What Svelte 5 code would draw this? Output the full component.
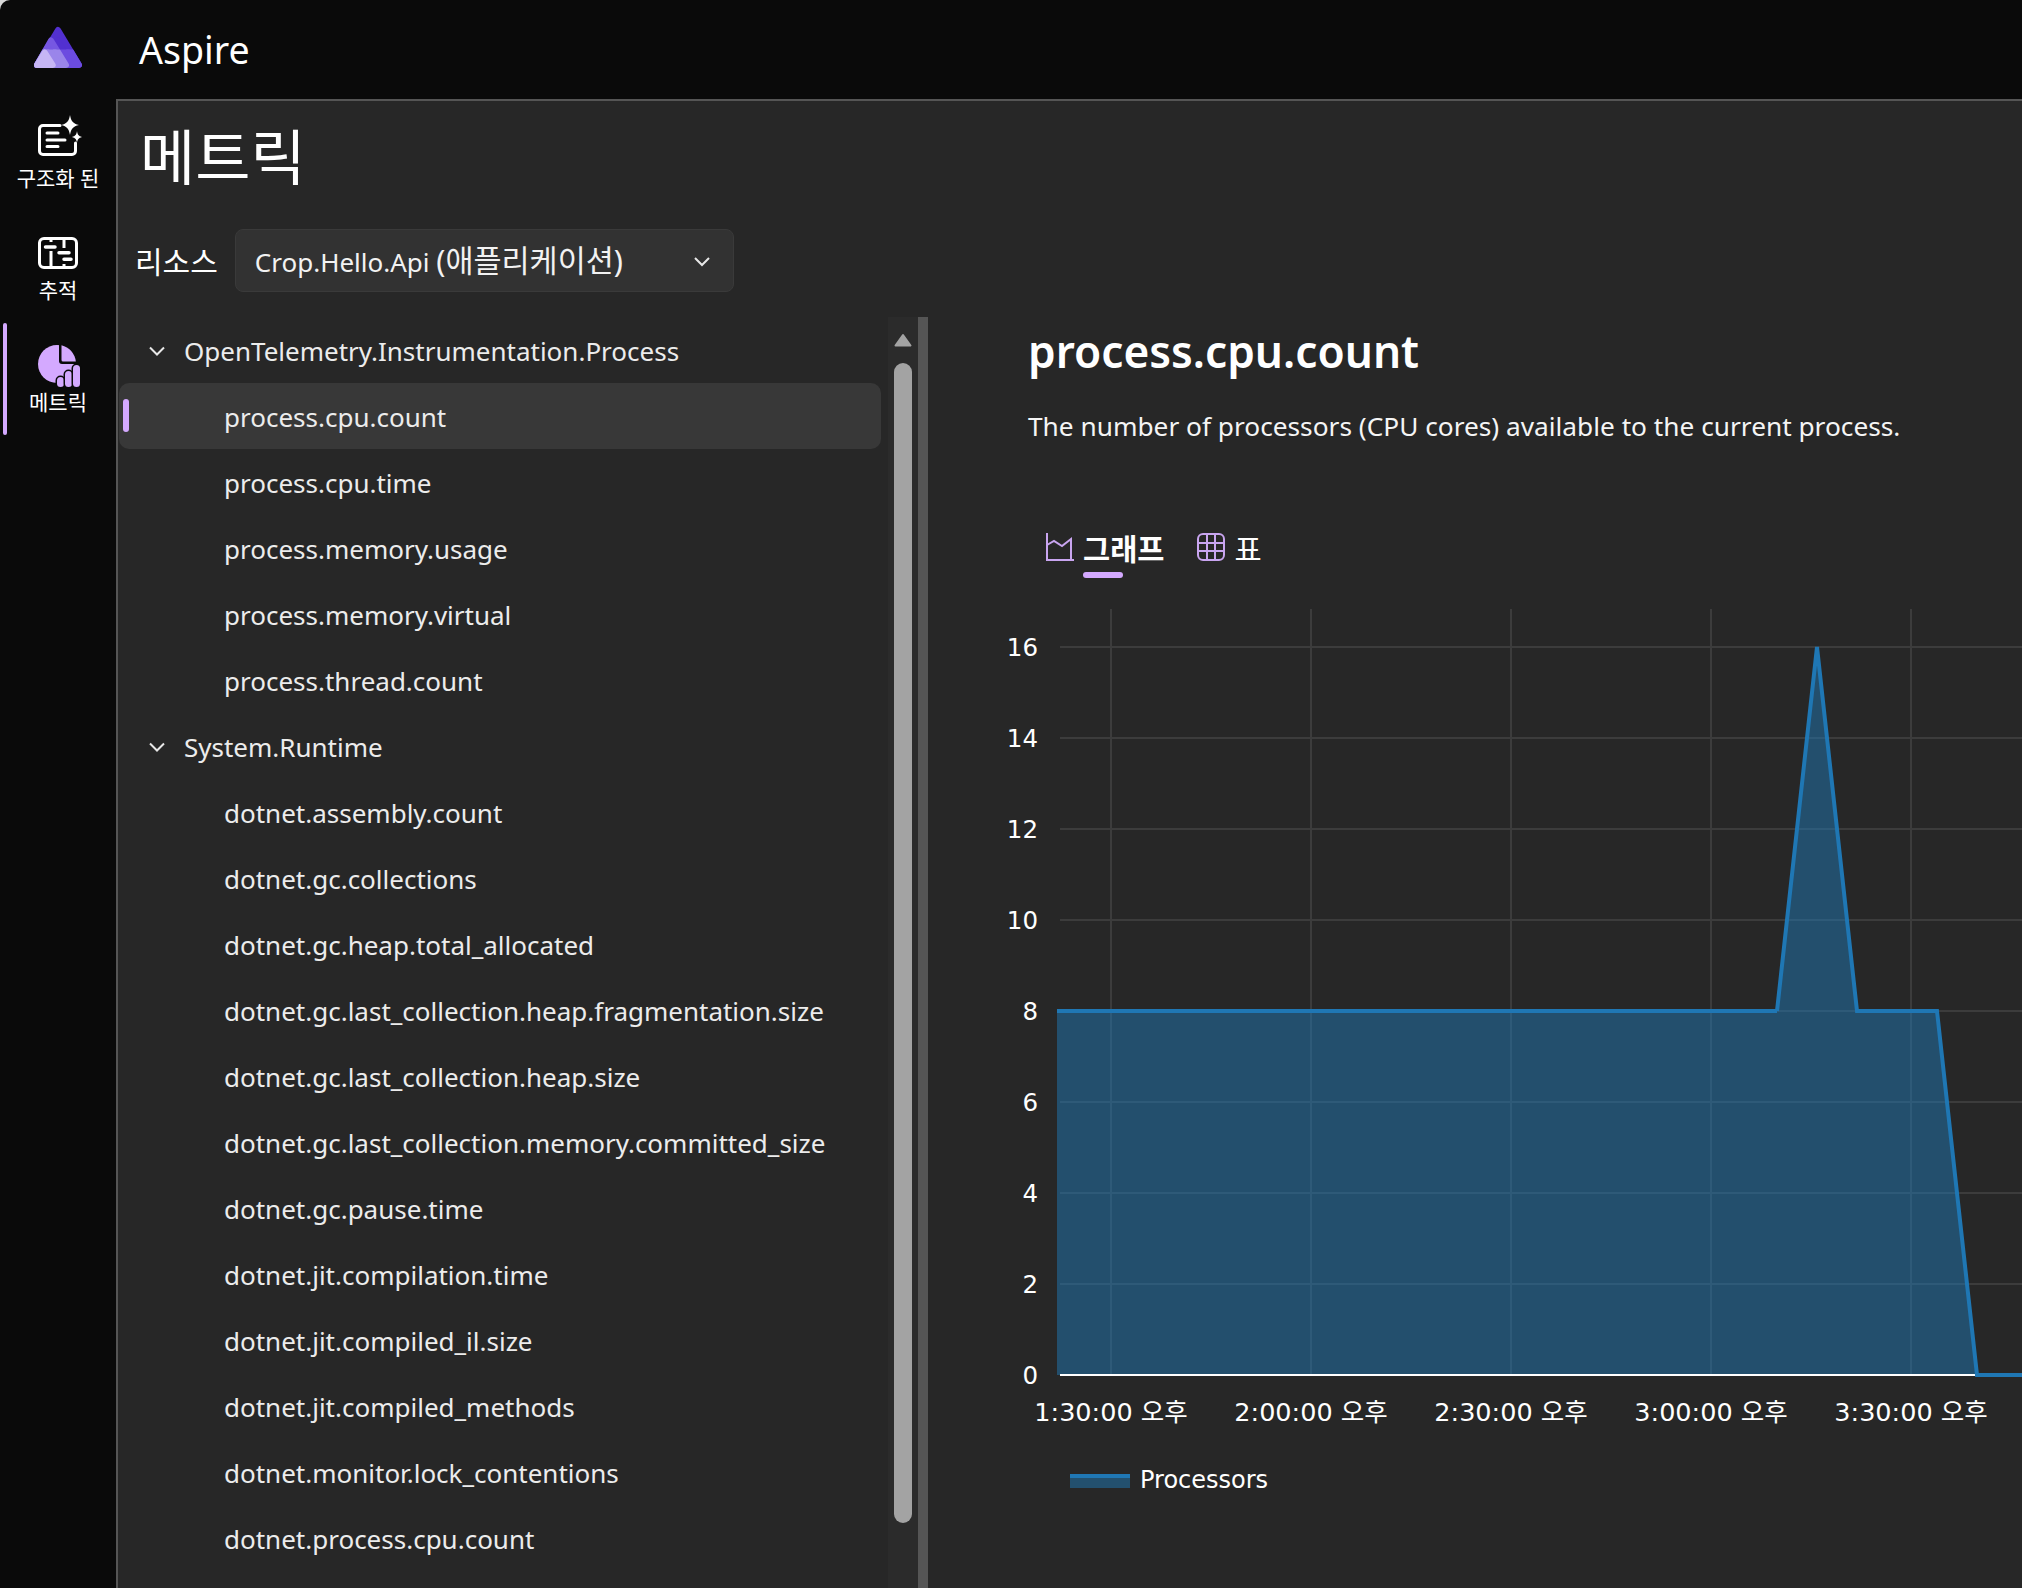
<script>
  const groups = [
    {
      name: 'OpenTelemetry.Instrumentation.Process',
      items: ['process.cpu.count', 'process.cpu.time', 'process.memory.usage', 'process.memory.virtual', 'process.thread.count']
    },
    {
      name: 'System.Runtime',
      items: [
        'dotnet.assembly.count',
        'dotnet.gc.collections',
        'dotnet.gc.heap.total_allocated',
        'dotnet.gc.last_collection.heap.fragmentation.size',
        'dotnet.gc.last_collection.heap.size',
        'dotnet.gc.last_collection.memory.committed_size',
        'dotnet.gc.pause.time',
        'dotnet.jit.compilation.time',
        'dotnet.jit.compiled_il.size',
        'dotnet.jit.compiled_methods',
        'dotnet.monitor.lock_contentions',
        'dotnet.process.cpu.count'
      ]
    }
  ];
  const selected = 'process.cpu.count';

  // chart coordinates are page pixels, the svg viewBox starts at the pane origin
  const yTicks = [16, 14, 12, 10, 8, 6, 4, 2, 0];
  const yOf = (v) => 1375 - v * 45.5;
  const xTicks = [
    [1111, '1:30:00 오후'],
    [1311, '2:00:00 오후'],
    [1511, '2:30:00 오후'],
    [1711, '3:00:00 오후'],
    [1911, '3:30:00 오후']
  ];
  const line = [[1057, 8], [1777, 8], [1817, 16], [1857, 8], [1937, 8], [1977, 0], [2030, 0]];
  const linePts = line.map(([x, v]) => `${x},${yOf(v)}`).join(' ');
  const areaPts = `1057,${yOf(0)} ${linePts}`;
</script>

<div class="shell">
  <header class="topbar">
    <div class="logo">
      <svg width="48" height="44" viewBox="0 0 48 44" stroke-width="6" stroke-linejoin="round">
        <defs>
          <clipPath id="logo-lower"><rect x="0" y="23.5" width="48" height="21" /></clipPath>
        </defs>
        <path d="M24 4 L45 39 H3 Z" fill="#5230d0" stroke="#5230d0" />
        <path d="M17 14.500 L32 39 H3 Z" fill="#7657e2" stroke="#7657e2" />
        <g clip-path="url(#logo-lower)">
          <path d="M24 4 L45 39 H3 Z" fill="#6c4ce0" stroke="#6c4ce0" />
          <path d="M17 14.500 L32 39 H3 Z" fill="#9a85ea" stroke="#9a85ea" />
        </g>
        <path d="M10.800 26.500 L18.700 39 H3 Z" fill="#c6b6f4" stroke="#c6b6f4" />
      </svg>
    </div>
    <span class="brand">Aspire</span>
  </header>

  <div class="body">
    <nav class="rail">
      <div class="rail-item">
        <svg class="rail-icon" width="48" height="48" viewBox="0 0 48 48" fill="none" stroke="#fff" stroke-width="3" stroke-linecap="round">
          <path d="M26 12.500 H9 a3.500 3.500 0 0 0 -3.500 3.500 V38 a3.500 3.500 0 0 0 3.500 3.500 H38 a3.500 3.500 0 0 0 3.500 -3.500 V30" />
          <path d="M13 20 H24 M13 27 H31 M13 33.500 H24" />
          <path d="M36 2 C37 8 39 10.500 45 12 C39 13.500 37 16 36 22 C35 16 33 13.500 27 12 C33 10.500 35 8 36 2 Z" fill="#fff" stroke="none" />
          <path d="M43 18 C43.500 21.500 44.500 23 48 24 C44.500 25 43.500 26.500 43 30 C42.500 26.500 41.500 25 38 24 C41.500 23 42.500 21.500 43 18 Z" fill="#fff" stroke="none" />
        </svg>
        <span>구조화 된</span>
      </div>
      <div class="rail-item">
        <svg class="rail-icon" width="48" height="48" viewBox="0 -4 48 48" fill="none" stroke="#fff" stroke-width="3" stroke-linecap="round">
          <rect x="5.500" y="9.500" width="37" height="29" rx="4.500" />
          <path d="M17 10 V13 M17 22 V38 M30 10 V19 M30 35 V38" stroke-linecap="butt" />
          <path d="M11.500 18 H21 M25 23.700 H35 M30 30.300 H37" stroke-width="3.500" />
        </svg>
        <span>추적</span>
      </div>
      <div class="rail-item active">
        <svg class="rail-icon" width="48" height="48" viewBox="0 -4 48 48">
          <circle cx="23" cy="23" r="19" fill="#d4a9ff" />
          <path d="M25 0 V20 a3 3 0 0 0 3 3 H48 V0 Z" fill="#0a0a0a" />
          <path d="M27.500 4.200 V19 a1.500 1.500 0 0 0 1.500 1.500 H41.800 A19 19 0 0 0 27.500 4.200 Z" fill="#d4a9ff" />
          <g fill="#d4a9ff" stroke="#0a0a0a" stroke-width="3" paint-order="stroke">
            <rect x="23" y="36" width="7" height="10" rx="3.500" />
            <rect x="31" y="30" width="7" height="16" rx="3.500" />
            <rect x="39" y="24" width="7" height="22" rx="3.500" />
          </g>
        </svg>
        <span>메트릭</span>
      </div>
    </nav>

    <main class="page">
      <h1>메트릭</h1>

      <div class="resource">
        <span class="resource-label">리소스</span>
        <div class="select">
          <span class="select-value">Crop.Hello.Api <span class="ko">(애플리케이션)</span></span>
          <svg width="22" height="22" viewBox="0 0 22 22" fill="none" stroke="#e8e8e8" stroke-width="2">
            <path d="M4 8 L11 15 L18 8" />
          </svg>
        </div>
      </div>

      <div class="split">
        <div class="tree">
          {#each groups as group}
            <div class="row group">
              <svg width="20" height="20" viewBox="0 0 20 20" fill="none" stroke="#e8e8e8" stroke-width="2">
                <path d="M3 6.500 L10 13.500 L17 6.500" />
              </svg>
              <span>{group.name}</span>
            </div>
            {#each group.items as item}
              <div class="row leaf" class:selected={item === selected}>
                <span>{item}</span>
              </div>
            {/each}
          {/each}
        </div>

        <div class="scrollbar">
          <svg class="arrow" width="18" height="14" viewBox="0 0 18 14">
            <path d="M9 2 L16.500 12.500 H1.500 Z" fill="#a3a3a3" stroke="#a3a3a3" stroke-width="2" stroke-linejoin="round" />
          </svg>
          <div class="thumb"></div>
        </div>
        <div class="splitter"></div>

        <section class="detail">
          <h2>process.cpu.count</h2>
          <p>The number of processors (CPU cores) available to the current process.</p>

          <div class="tabs">
            <div class="tab active">
              <svg width="28" height="28" viewBox="0 0 28 28" fill="none" stroke="#c9a5f0" stroke-width="2">
                <path d="M1 0 V27 H28 M1 12 L8 8 L16 13 L25 6 V27" />
              </svg>
              <span>그래프</span>
            </div>
            <div class="tab">
              <svg width="28" height="28" viewBox="0 0 28 28" fill="none" stroke="#c9a5f0" stroke-width="2">
                <rect x="1" y="1" width="26" height="26" rx="5" />
                <path d="M10 1 V27 M18 1 V27 M1 10 H27 M1 18 H27" />
              </svg>
              <span>표</span>
            </div>
          </div>

          <svg class="chart" width="1094" height="998" viewBox="928 590 1094 998">
            {#each xTicks as [x]}
              <line x1={x} x2={x} y1="609" y2="1375" class="grid" />
            {/each}
            {#each yTicks as v}
              <line x1="1060" x2="2022" y1={yOf(v)} y2={yOf(v)} class="grid" />
              <text x="1038" y={yOf(v) + 9} text-anchor="end" class="tick">{v}</text>
            {/each}
            <polygon points={areaPts} fill="#1f77b4" fill-opacity="0.5" />
            <line x1="1060" x2="1980" y1="1375" y2="1375" stroke="#fff" stroke-width="2" />
            <polyline points={linePts.split(' ').slice(1).join(' ')} fill="none" stroke="#1f77b4" stroke-width="4" />
            <line x1="1057" x2="1777" y1={yOf(8)} y2={yOf(8)} stroke="#1f77b4" stroke-width="4" />
            <polyline points="1977,1375 2030,1375" fill="none" stroke="#1f77b4" stroke-width="4" />
            {#each xTicks as [x, label]}
              <text {x} y="1421" text-anchor="middle" class="xtick">{label}</text>
            {/each}
            <rect x="1070" y="1474" width="60" height="14" fill="#23506e" />
            <rect x="1070" y="1474" width="60" height="4" fill="#1f77b4" />
            <text x="1140" y="1488" class="legend">Processors</text>
          </svg>
        </section>
      </div>
    </main>
  </div>
</div>

<style>
  :global(body) {
    margin: 0;
    background: #d8d8d8;
  }

  .shell {
    width: 2022px;
    height: 1588px;
    overflow: hidden;
    background: #0a0a0a;
    border-top-left-radius: 10px;
    color: #fff;
    font-family: "Noto Sans", "Noto Sans CJK KR", sans-serif;
    display: flex;
    flex-direction: column;
  }

  .topbar {
    height: 99px;
    flex: none;
    display: flex;
    align-items: center;
  }

  .logo {
    width: 116px;
    display: flex;
    justify-content: center;
    padding-bottom: 4px;
  }

  .brand {
    margin-left: 23px;
    font-size: 37.5px;
    color: #fff;
  }

  .body {
    flex: 1;
    display: flex;
    min-height: 0;
  }

  .rail {
    width: 116px;
    flex: none;
    display: flex;
    flex-direction: column;
  }

  .rail-item {
    height: 112px;
    position: relative;
    display: flex;
    flex-direction: column;
    align-items: center;
    font-size: 21px;
    line-height: 26px;
    white-space: nowrap;
  }

  .rail-icon {
    margin-top: 14px;
    margin-bottom: 4px;
    flex: none;
    overflow: visible;
  }

  .rail-item.active::before {
    content: '';
    position: absolute;
    left: 3px;
    top: 0;
    width: 4px;
    height: 112px;
    border-radius: 2px;
    background: #d4a9ff;
  }

  .page {
    flex: 1;
    min-width: 0;
    background: #272727;
    border-left: 2px solid #555;
    border-top: 2px solid #555;
    display: flex;
    flex-direction: column;
  }

  h1 {
    margin: 24px 0 0 22px;
    font-size: 60px;
    font-weight: 400;
    line-height: 64px;
  }

  .resource {
    margin-top: 40px;
    margin-left: 17px;
    display: flex;
    align-items: center;
    gap: 17px;
  }

  .resource-label {
    font-size: 30px;
    margin-top: -2px;
  }

  .select {
    width: 499px;
    height: 63px;
    box-sizing: border-box;
    padding: 0 20px 0 19px;
    display: flex;
    align-items: center;
    justify-content: space-between;
    background: #323232;
    border: 1px solid #3a3a3a;
    border-radius: 8px;
    font-size: 26px;
    color: #f2f2f2;
  }

  .select-value {
    margin-top: -4px;
  }

  .ko {
    font-size: 30.5px;
  }

  .split {
    margin-top: 25px;
    flex: 1;
    min-height: 0;
    display: flex;
  }

  .tree {
    width: 770px;
    flex: none;
    box-sizing: border-box;
    padding: 0 7px 0 1px;
  }

  .row {
    height: 66px;
    box-sizing: border-box;
    padding-top: 2px;
    display: flex;
    align-items: center;
    font-size: 26px;
    color: #ececec;
    white-space: nowrap;
    position: relative;
  }

  .group {
    padding-left: 28px;
    gap: 17px;
  }

  .leaf {
    padding-left: 105px;
  }

  .selected {
    background: #383838;
    border-radius: 10px;
  }

  .selected::before {
    content: '';
    position: absolute;
    left: 4px;
    top: 16px;
    width: 6px;
    height: 33px;
    border-radius: 3px;
    background: #d4a9ff;
  }

  .scrollbar {
    width: 30px;
    flex: none;
    background: #2b2b2b;
    position: relative;
  }

  .arrow {
    position: absolute;
    left: 6px;
    top: 16px;
  }

  .thumb {
    position: absolute;
    left: 6px;
    top: 46px;
    width: 18px;
    height: 1160px;
    border-radius: 9px;
    background: #a3a3a3;
  }

  .splitter {
    width: 10px;
    flex: none;
    background: #555;
  }

  .detail {
    flex: 1;
    min-width: 0;
  }

  h2 {
    margin: 0 0 0 100px;
    font-size: 44.2px;
    font-weight: 600;
    line-height: 68px;
  }

  .detail p {
    margin: 21px 0 0 100px;
    font-size: 26.25px;
    line-height: 40px;
    color: #f5f5f5;
    white-space: nowrap;
  }

  .tabs {
    margin: 81px 0 0 118px;
    display: flex;
    gap: 33px;
  }

  .tab {
    display: flex;
    align-items: center;
    gap: 9px;
    font-size: 29.5px;
    height: 40px;
    position: relative;
  }

  .tab.active {
    font-weight: 700;
  }

  .tab.active::after {
    content: '';
    position: absolute;
    left: 37px;
    bottom: -11px;
    width: 40px;
    height: 6px;
    border-radius: 3px;
    background: #d4a9ff;
  }

  .chart {
    display: block;
    position: relative;
    margin-top: 23px;
    overflow: hidden;
  }

  .grid {
    stroke: #3c3c3c;
    stroke-width: 2;
  }

  .tick,
  .xtick,
  .legend {
    fill: #fff;
    font-family: "DejaVu Sans", "Noto Sans CJK KR", sans-serif;
    font-size: 24.5px;
  }

  .xtick {
    font-size: 25.5px;
  }

  .legend {
    font-size: 24px;
  }
</style>
